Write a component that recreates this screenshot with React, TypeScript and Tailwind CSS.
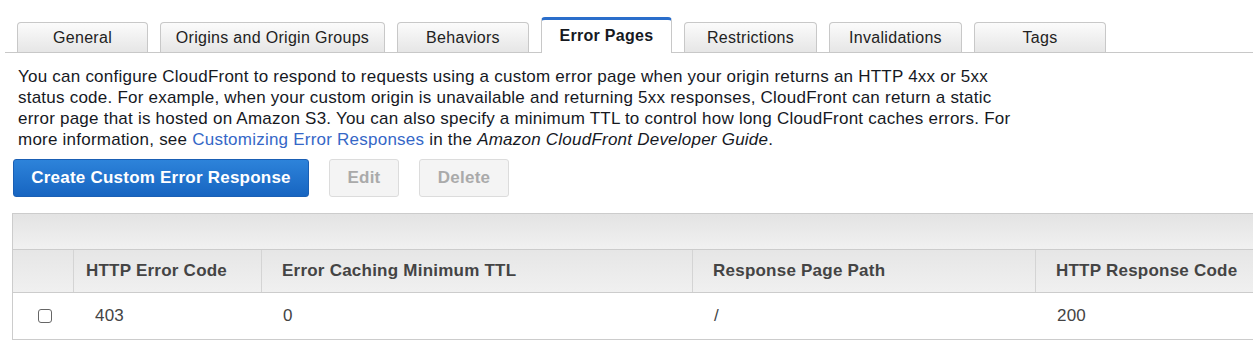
import React from "react";

const tabs = [
  { label: "General", w: "w-[131px]" },
  { label: "Origins and Origin Groups", w: "w-[225px]" },
  { label: "Behaviors", w: "w-[132px]" },
  { label: "Error Pages", w: "w-[131px]", active: true },
  { label: "Restrictions", w: "w-[133px]" },
  { label: "Invalidations", w: "w-[133px]" },
  { label: "Tags", w: "w-[132px]" },
];

export default function App() {
  return (
    <div className="w-[1253px] h-[341px] overflow-hidden bg-white text-[17px] tracking-[0.23px] text-[#222] font-['Liberation_Sans',Arial,sans-serif]">
      {/* Tabs */}
      <div className="ml-[5px] pt-[17px] h-[53px] border-b border-[#c8c8c8] flex items-end pl-[12px] gap-[12px] text-[16px] tracking-[0.3px]">
        {tabs.map((t) =>
          t.active ? (
            <div
              key={t.label}
              className={`${t.w} h-[36px] -mb-px bg-white border border-b-0 border-[#c8c8c8] border-t-[3px] border-t-[#2a6ecb] rounded-t-[4px] flex items-center justify-center font-bold text-[#16191f] pb-[2px]`}
            >
              {t.label}
            </div>
          ) : (
            <div
              key={t.label}
              className={`${t.w} h-[30px] bg-gradient-to-b from-[#fbfbfb] to-[#e6e6e6] border border-b-0 border-[#c8c8c8] rounded-t-[4px] flex items-center justify-center text-[#222]`}
            >
              {t.label}
            </div>
          )
        )}
      </div>

      {/* Description */}
      <p className="ml-[18px] mt-[13px] w-[998px] leading-[21px] text-[#16191f]">
        You can configure CloudFront to respond to requests using a custom error page when your origin returns an HTTP 4xx or 5xx status code. For example, when your custom origin is unavailable and returning 5xx responses, CloudFront can return a static error page that is hosted on Amazon S3. You can also specify a minimum TTL to control how long CloudFront caches errors. For more information, see{" "}
        <a className="text-[#3567c7]">Customizing Error Responses</a> in the{" "}
        <i>Amazon CloudFront Developer Guide</i>.
      </p>

      {/* Buttons */}
      <div className="ml-[13px] mt-[9px] flex gap-[20px]">
        <button className="h-[38px] w-[296px] rounded-[3px] border border-[#1a5fb4] bg-gradient-to-b from-[#2d83da] to-[#1765c1] text-white font-bold">
          Create Custom Error Response
        </button>
        <button className="h-[38px] w-[70px] rounded-[3px] border border-[#dcdcdc] bg-[#f4f4f4] text-[#aaa] font-bold">
          Edit
        </button>
        <button className="h-[38px] w-[90px] rounded-[3px] border border-[#dcdcdc] bg-[#f4f4f4] text-[#aaa] font-bold">
          Delete
        </button>
      </div>

      {/* Table */}
      <div className="ml-[12px] mt-[16px] w-[1260px] border-l border-t border-[#cccccc]">
        <div className="h-[36px] bg-gradient-to-b from-[#e3e3e3] to-[#f1f1f1] border-b border-[#cccccc]" />
        <div className="h-[43px] flex bg-gradient-to-b from-[#e6e6e6] to-[#f0f0f0] border-b border-[#cccccc] font-bold text-[#444]">
          <div className="w-[61px] border-r border-[#d4d4d4]" />
          <div className="w-[188px] pl-[12px] flex items-center border-r border-[#d4d4d4]">HTTP Error Code</div>
          <div className="w-[431px] pl-[20px] flex items-center border-r border-[#d4d4d4]">Error Caching Minimum TTL</div>
          <div className="w-[343px] pl-[20px] flex items-center border-r border-[#d4d4d4]">Response Page Path</div>
          <div className="flex-1 pl-[20px] flex items-center">HTTP Response Code</div>
        </div>
        <div className="h-[47px] flex items-center border-b border-[#cccccc] text-[#444]">
          <div className="w-[61px] flex items-center pl-[25px]">
            <span className="w-[14px] h-[14px] border border-[#666] rounded-[3px] bg-white" />
          </div>
          <div className="w-[188px] pl-[21px]">403</div>
          <div className="w-[431px] pl-[21px]">0</div>
          <div className="w-[343px] pl-[21px]">/</div>
          <div className="flex-1 pl-[21px]">200</div>
        </div>
      </div>
    </div>
  );
}
